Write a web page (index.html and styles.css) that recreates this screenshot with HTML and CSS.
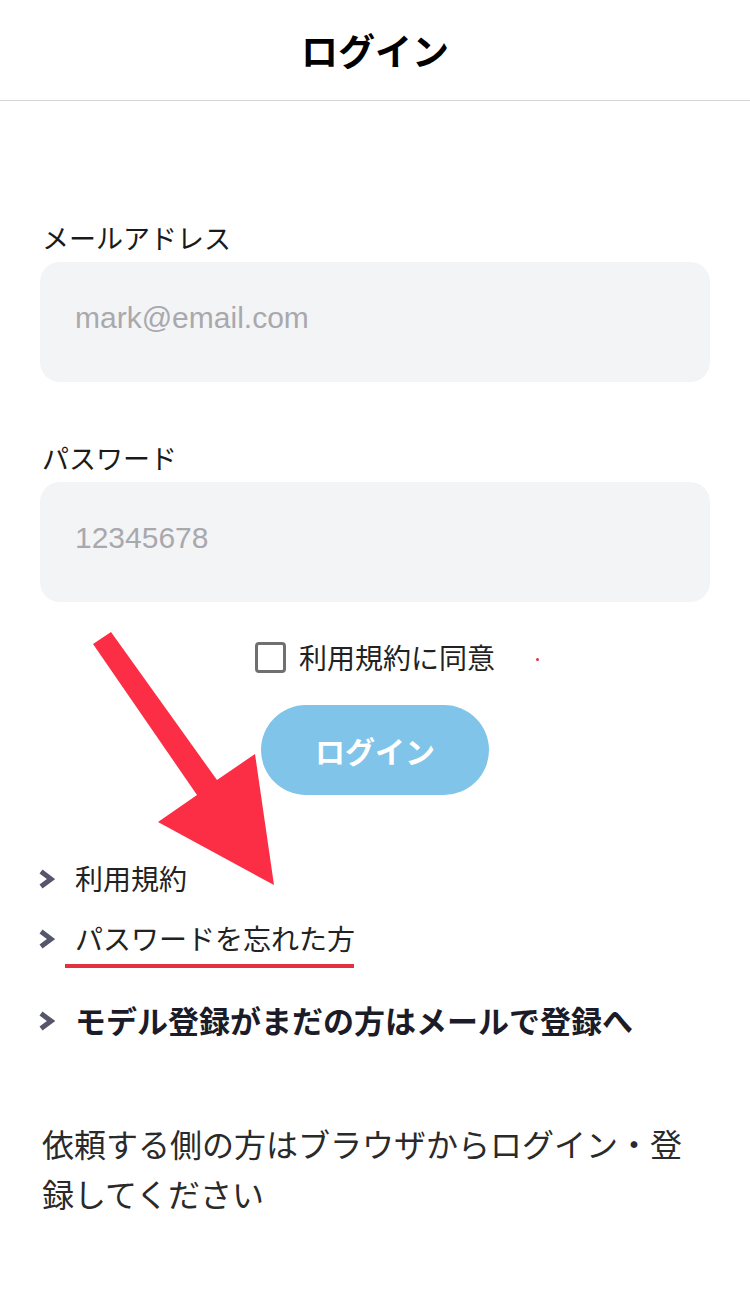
FILE: index.html
```html
<!DOCTYPE html>
<html lang="ja">
<head>
<meta charset="utf-8">
<title>ログイン</title>
<link rel="stylesheet" href="styles.css">
</head>
<body>
<div class="page">
  <header class="topbar">
    <h1 class="title">ログイン</h1>
  </header>
  <main class="content">
    <div class="field">
      <label class="label">メールアドレス</label>
      <div class="input"><span class="placeholder">mark@email.com</span></div>
    </div>
    <div class="field field-second">
      <label class="label">パスワード</label>
      <div class="input"><span class="placeholder">12345678</span></div>
    </div>
    <div class="agree">
      <div class="agree-inner">
        <span class="checkbox"></span>
        <span class="agree-text">利用規約に同意</span>
        <span class="red-dot"></span>
      </div>
    </div>
    <div class="btn-row">
      <button class="login-btn">ログイン</button>
    </div>
    <ul class="links">
      <li class="link"><span class="chev"><svg class="chev-icon" width="17" height="22" viewBox="0 0 17 22"><path d="M3 3.5 L13 11 L3 18.5" fill="none" stroke="#56566b" stroke-width="5" stroke-linejoin="miter"/></svg></span><span>利用規約</span></li>
      <li class="link"><span class="chev"><svg class="chev-icon" width="17" height="22" viewBox="0 0 17 22"><path d="M3 3.5 L13 11 L3 18.5" fill="none" stroke="#56566b" stroke-width="5" stroke-linejoin="miter"/></svg></span><span>パスワードを忘れた方</span></li>
    </ul>
    <div class="mark-line"></div>
    <div class="link link-bold"><span class="chev"><svg class="chev-icon" width="17" height="22" viewBox="0 0 17 22"><path d="M3 3.5 L13 11 L3 18.5" fill="none" stroke="#56566b" stroke-width="5" stroke-linejoin="miter"/></svg></span><span>モデル登録がまだの方はメールで登録へ</span></div>
    <p class="note">依頼する側の方はブラウザからログイン・登録してください</p>
  </main>
  <svg class="arrow" width="750" height="1291" viewBox="0 0 750 1291">
    <polygon points="93,644 111,632 217,780 255,754 274,885 158,822 197,795" fill="#fb2e45"/>
  </svg>
</div>
</body>
</html>
```
FILE: styles.css
```css
* { box-sizing: border-box; }
html, body { margin: 0; padding: 0; background: #fff; }
body {
  font-family: "Noto Sans CJK JP", "Noto Sans", sans-serif;
  color: #1d1d1f;
}
.page {
  position: relative;
  width: 750px;
  min-height: 1291px;
}
.topbar {
  height: 101px;
  border-bottom: 1px solid #d4d4d4;
  display: flex;
  align-items: center;
  justify-content: center;
}
.title {
  margin: 0;
  font-size: 37px;
  font-weight: 700;
  line-height: 40px;
  color: #000;
}
.content {
  padding: 0 40px;
}
.field {
  display: flex;
  flex-direction: column;
  gap: 4px;
  margin-top: 117px;
}
.field-second { margin-top: 56px; }
.label {
  font-size: 27px;
  line-height: 40px;
  padding-left: 2px;
  color: #1a1a1a;
}
.input {
  height: 120px;
  border-radius: 20px;
  background: #f3f4f6;
  display: flex;
  align-items: center;
  padding-left: 35px;
  padding-bottom: 8px;
}
.placeholder {
  font-family: "Liberation Sans", Arial, sans-serif;
  font-size: 30px;
  color: #a9a9ad;
}
.agree {
  margin-top: 35px;
  display: flex;
  justify-content: center;
  height: 40px;
}
.agree-inner {
  position: relative;
  display: flex;
  align-items: center;
  gap: 13px;
}
.checkbox {
  width: 31px;
  height: 31px;
  border: 3px solid #707070;
  border-radius: 4px;
  background: #fff;
}
.agree-text {
  font-size: 28px;
  line-height: 40px;
  color: #222;
}
.red-dot {
  position: absolute;
  left: calc(100% + 41px);
  top: 21px;
  width: 3px;
  height: 3px;
  border-radius: 50%;
  background: #e0304a;
}
.btn-row {
  margin-top: 28px;
  display: flex;
  justify-content: center;
}
.login-btn {
  width: 228px;
  height: 90px;
  border: none;
  border-radius: 45px;
  background: #80c4e9;
  color: #fff;
  font-family: "Noto Sans CJK JP", "Noto Sans", sans-serif;
  font-size: 30px;
  font-weight: 700;
  padding: 0;
}
.links {
  list-style: none;
  margin: 63px 0 0 0;
  padding: 0;
  display: flex;
  flex-direction: column;
  gap: 20px;
}
.link {
  display: flex;
  align-items: center;
  height: 40px;
  font-size: 28px;
  line-height: 40px;
  color: #222;
}
.chev {
  flex: 0 0 37px;
  display: flex;
  align-items: center;
  margin-left: -2px;
  padding-top: 1px;
}
.chev-icon {
  display: block;
  width: 17px;
  height: 22px;
  flex: none;
}
.mark-line {
  margin: 6px 0 0 25px;
  width: 289px;
  height: 4px;
  background: #e3323f;
}
.link-bold {
  margin-top: 32px;
  font-size: 31px;
  font-weight: 700;
  color: #1c1c28;
}
.note {
  margin: 78px 0 0 0;
  padding-left: 2px;
  font-size: 32px;
  line-height: 50px;
  color: #2a2a2a;
}
.arrow {
  position: absolute;
  left: 0;
  top: 0;
  pointer-events: none;
}
```
